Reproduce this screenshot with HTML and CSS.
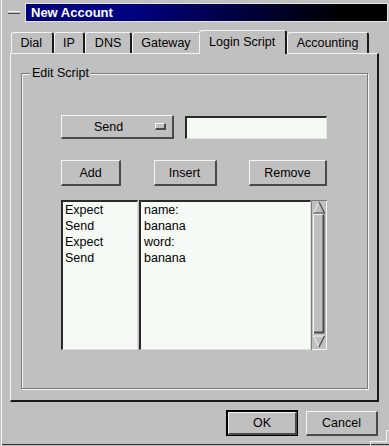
FILE: index.html
```html
<!DOCTYPE html>
<html lang="en">

<head>
    <meta charset="UTF-8">
    <title>New Account</title>
    <link rel="stylesheet" href="styles.css">
</head>

<body>
    <div class="window">
        <div class="titlebar">
            <span class="menu-btn"></span>
            <div class="title">New Account</div>
        </div>

        <div class="tabs">
            <div class="tab">Dial</div>
            <div class="tab">IP</div>
            <div class="tab">DNS</div>
            <div class="tab">Gateway</div>
            <div class="tab active">Login Script</div>
            <div class="tab">Accounting</div>
        </div>

        <div class="panel">
            <div class="group">
                <div class="group-label">Edit Script</div>

                <div class="row-send">
                    <button class="btn option"><span class="option-label">Send</span><span class="indicator"></span></button>
                    <input type="text" class="entry">
                </div>

                <div class="row-actions">
                    <button class="btn btn-add">Add</button>
                    <button class="btn btn-insert">Insert</button>
                    <button class="btn btn-remove">Remove</button>
                </div>

                <div class="list">
                    <div class="col col-cmd">
                        <div>Expect</div>
                        <div>Send</div>
                        <div>Expect</div>
                        <div>Send</div>
                    </div>
                    <div class="col col-arg">
                        <div>name:</div>
                        <div>banana</div>
                        <div>word:</div>
                        <div>banana</div>
                    </div>
                    <svg class="scrollbar" width="16" height="150" viewBox="0 0 16 150">
                        <rect x="0" y="0" width="16" height="150" fill="#c0c0c0" />
                        <path d="M0.5 150V0.5H16" stroke="#7c7c7c" fill="none" />
                        <path d="M15.5 1V149.5H1" stroke="#f4f4f4" fill="none" />
                        <!-- up arrow -->
                        <polygon points="2.5,13 8,2 13.5,13" fill="#c0c0c0" />
                        <path d="M2.5 13L8 2" stroke="#f4f4f4" fill="none" />
                        <path d="M8 2L13.5 13H2.5" stroke="#4a4a4a" stroke-width="1.2" fill="none" />
                        <!-- slider -->
                        <rect x="2" y="14" width="12" height="120" fill="#c0c0c0" />
                        <path d="M2.5 134V14.5H13" stroke="#f4f4f4" fill="none" />
                        <path d="M12.5 14.5V132.5H3" stroke="#4a4a4a" stroke-width="2" fill="none" />
                        <!-- down arrow -->
                        <polygon points="2.5,136 13.5,136 8,147" fill="#c0c0c0" />
                        <path d="M8 147L2.5 136H13.5" stroke="#f4f4f4" fill="none" />
                        <path d="M13.5 136L8 147" stroke="#4a4a4a" stroke-width="1.2" fill="none" />
                    </svg>
                </div>
            </div>
        </div>

        <div class="footer">
            <div class="default-ring">
                <button class="btn">OK</button>
            </div>
            <button class="btn btn-cancel">Cancel</button>
        </div>

        <span class="corner corner-r"></span>
        <span class="corner corner-b"></span>
    </div>
</body>

</html>
```

FILE: styles.css
```css
* {
    box-sizing: border-box;
}

body {
    margin: 0;
    background-color: #c0c0c0;
    font-family: "Liberation Sans", Arial, sans-serif;
    font-size: 12.5px;
    color: #000;
}

.window {
    position: relative;
    width: 389px;
    height: 446px;
    overflow: hidden;
    box-shadow: inset 1px 0 #c0c0c0, inset 2px 0 #f4f4f4, inset 0 -1px #c0c0c0, inset 0 -2px #333;
}

/* title bar */
.titlebar {
    display: flex;
    align-items: center;
    height: 19px;
    margin-top: 3px;
}

.menu-btn {
    width: 12px;
    height: 3px;
    margin: 0 5px 0 8px;
    border-top: 1px solid #f4f4f4;
    border-bottom: 1px solid #4a4a4a;
}

.title {
    flex: 1;
    height: 19px;
    margin-right: 1px;
    padding-left: 5px;
    border: 1px solid #e4e4e4;
    background: linear-gradient(to right, #000080 30%, #000 88%);
    color: #fff;
    font-weight: bold;
    font-size: 13px;
    line-height: 17px;
}

/* tabs */
.tabs {
    display: flex;
    align-items: flex-end;
    height: 23px;
    margin-top: 8px;
    padding-left: 11px;
}

.tab {
    height: 21px;
    padding: 0 8.5px 0 8.5px;
    border-top: 1px solid #f4f4f4;
    border-left: 1px solid #f4f4f4;
    border-right: 2px solid #1a1a1a;
    border-radius: 3px 3px 0 0;
    line-height: 20px;
    white-space: nowrap;
}

.tab:first-child {
    padding: 0 9.5px 0 8.5px;
}

.tab.active {
    position: relative;
    z-index: 1;
    height: 24px;
    margin: 0 0 -1px -2px;
    padding: 0 10px 0 9px;
    background-color: #c0c0c0;
    line-height: 23px;
}

.panel {
    margin: 0 10px;
    padding: 0 9px 11px 10px;
    border-top: 1px solid #f4f4f4;
    border-left: 1px solid #f4f4f4;
    border-right: 2px solid #1a1a1a;
    border-bottom: 2px solid #1a1a1a;
}

/* etched frame */
.group {
    margin-top: 19px;
    padding: 0 40px 38px 39px;
    border: 1px solid #7a7a7a;
    box-shadow: inset 1px 1px #f4f4f4, 1px 1px #f4f4f4;
}

.group-label {
    width: max-content;
    margin: -8px 0 0 -31px;
    padding: 0 2px;
    background-color: #c0c0c0;
    line-height: 14px;
}

/* buttons */
.btn {
    padding: 0;
    font: inherit;
    color: #000;
    background-color: #c0c0c0;
    border-style: solid;
    border-width: 1px 2px 2px 1px;
    border-color: #f4f4f4 #4a4a4a #4a4a4a #f4f4f4;
}

.row-send {
    display: flex;
    align-items: flex-end;
    gap: 11px;
    height: 24px;
    margin-top: 35px;
}

.option {
    display: flex;
    align-items: center;
    width: 113px;
    height: 24px;
}

.option-label {
    flex: 1;
    text-align: center;
}

.indicator {
    width: 11px;
    height: 7px;
    margin-right: 6px;
    border-style: solid;
    border-width: 1px 2px 2px 1px;
    border-color: #f4f4f4 #4a4a4a #4a4a4a #f4f4f4;
}

.entry {
    width: 142px;
    height: 23px;
    margin: 0;
    padding: 0 3px;
    font: inherit;
    background-color: #f5faf5;
    border-style: solid;
    border-width: 2px 1px 1px 2px;
    border-color: #2a2a2a #e4e4e4 #e4e4e4 #2a2a2a;
    outline: none;
}

.row-actions {
    display: flex;
    justify-content: space-between;
    margin-top: 21px;
}

.row-actions .btn {
    height: 26px;
}

.btn-add {
    width: 60px;
}

.btn-insert {
    width: 63px;
}

.btn-remove {
    width: 78px;
}

/* list */
.list {
    display: flex;
    height: 150px;
    margin-top: 14px;
}

.col {
    height: 150px;
    background-color: #f5faf5;
    border-style: solid;
    border-width: 2px 1px 1px 2px;
    border-color: #2a2a2a #dcdcdc #dcdcdc #2a2a2a;
    line-height: 16px;
}

.col-cmd {
    width: 77px;
    margin-right: 1px;
    padding-left: 2px;
}

.col-arg {
    flex: 1;
    padding-left: 3px;
}

.scrollbar {
    display: block;
    flex-shrink: 0;
}

/* dialog buttons */
.footer {
    display: flex;
    justify-content: flex-end;
    align-items: flex-end;
    gap: 8px;
    height: 26px;
    margin-top: 8px;
    padding-right: 11px;
}

.default-ring {
    width: 72px;
    height: 26px;
    border-style: solid;
    border-color: #000;
    border-width: 2px 1px 1px 2px;
}

.default-ring .btn {
    display: block;
    width: 100%;
    height: 100%;
}

.btn-cancel {
    width: 72px;
    height: 25px;
}

/* window frame corner */
.corner {
    position: absolute;
    border-top: 1px solid #f4f4f4;
    border-left: 1px solid #f4f4f4;
}

.corner-r {
    left: 386px;
    top: 430px;
    width: 3px;
    height: 12px;
}

.corner-b {
    left: 370px;
    top: 441px;
    width: 17px;
    height: 4px;
}
```
